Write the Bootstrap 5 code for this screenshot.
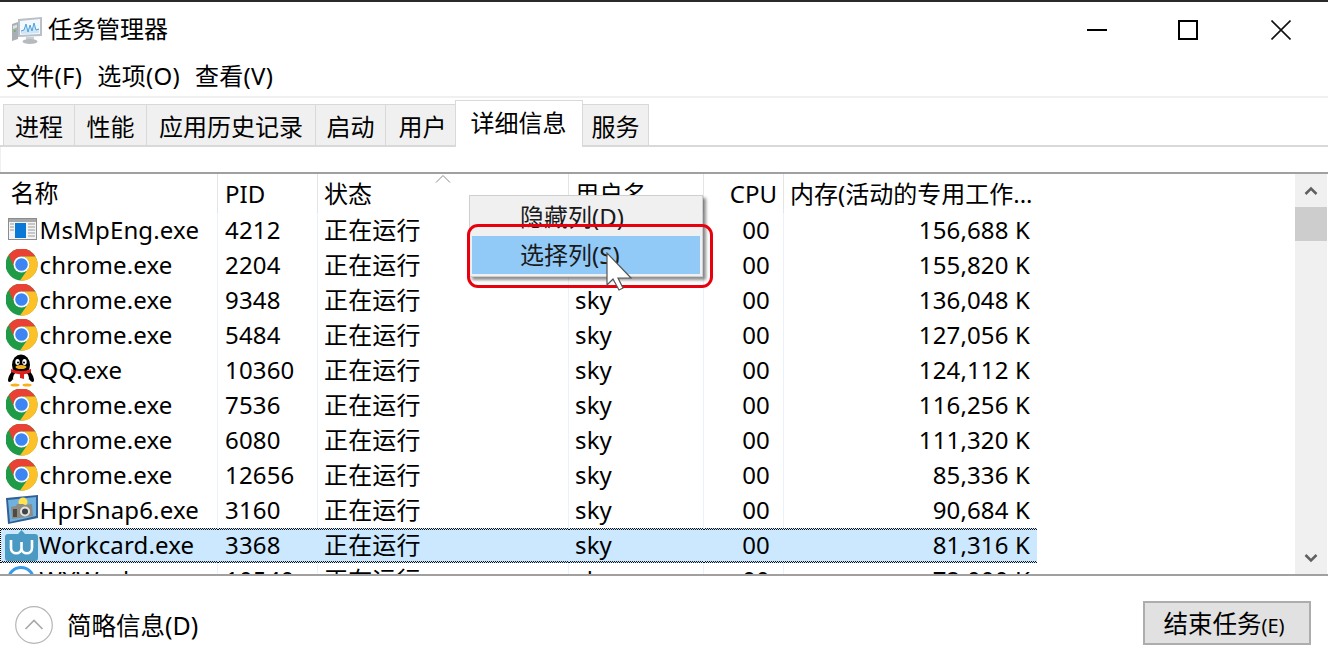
<!DOCTYPE html>
<html lang="zh-CN">
<head>
<meta charset="utf-8">
<title>任务管理器</title>
<link href="https://cdn.jsdelivr.net/npm/bootstrap@5.3.0/dist/css/bootstrap.min.css" rel="stylesheet">
<style>
html,body{margin:0;background:#fff}
body{width:1328px;height:672px;overflow:hidden;position:relative;color:#000;font-family:"Noto Sans","Noto Sans CJK SC",sans-serif;font-size:24px;line-height:1.2}
.tm-strip{height:2px;background:#2b2b2b}
.tm-title{height:54px;padding-left:12px;gap:6px;padding-top:1px}
.tm-title svg{width:30px;height:30px}
.tm-winbtns{margin-left:auto;gap:71px;padding-right:37px}
.tm-winbtns svg{width:20px;height:20px;display:block}
.tm-winbtns svg:last-child{margin-left:2px}
.tm-menu{height:40px;padding-left:6px;gap:15px;letter-spacing:.3px}
.tm-tabs{margin-top:0;border-top:2px solid #f0f0f0;height:51px;border-bottom:2px solid #d9d9d9;padding-left:3px;align-items:flex-end}
.tm-tab{height:41px;background:#f0f0f0;border:1px solid #d9d9d9;border-bottom:0;margin-right:-1px;display:flex;align-items:center;justify-content:center;padding-top:4px}
.tm-tab.tm-on{height:47px;background:#fff;margin-bottom:-2px;padding-top:0;padding-bottom:2px;position:relative}
.tm-w1{width:72px}.tm-w2{width:73px}.tm-w3{width:170px}.tm-w4{width:71px}.tm-w5{width:71px;padding-left:4px}.tm-w6{width:128px;padding-right:1px}.tm-w7{width:67px}
.tm-filter{height:25px;border-left:1px solid #f0f0f0}
.tm-wrap{height:404px;border-top:2px solid #a0a0a0;border-bottom:2px solid #a0a0a0;overflow:hidden}
.tm-scroller{width:1037px;height:400px;overflow:hidden;flex:none}
.tm-grid{width:1037px;table-layout:fixed;margin:0;--bs-table-bg:transparent;border-collapse:collapse}
.tm-grid th,.tm-grid td{padding:0 7px;height:35px;font-weight:400;white-space:nowrap;overflow:hidden;border:0;border-right:1px solid #eaf2fb;vertical-align:middle;color:#000;box-shadow:none;letter-spacing:.15px}
.tm-grid th{height:39px;border-right-color:#e5e5e5;padding-top:1px;letter-spacing:0}
.tm-grid td:first-child,.tm-grid th:first-child{padding:0 0 0 5px}
.tm-grid th:first-child{padding-left:10px}
.tm-grid th:nth-child(3),.tm-grid td:nth-child(3),.tm-grid th:nth-child(4),.tm-grid td:nth-child(4){padding-left:6px}
.tm-grid th.tm-num{padding-right:6px}
.tm-grid th:last-child{padding-left:6px;padding-right:0}
.tm-c1{width:217px}.tm-c2{width:100px}.tm-c3{width:251px}.tm-c4{width:135px}.tm-c5{width:80px}.tm-c6{width:254px}
.tm-name{display:flex;align-items:center;gap:1px}
.tm-name svg{width:33px;height:33px;flex:none}
.tm-num{text-align:right}
.tm-cpu{text-align:right;padding-right:13px!important}
.tm-grid tr.tm-sel td{background:#cce8ff;border-right-color:#cce8ff;position:relative;overflow:visible}
.tm-grid tr.tm-sel td::before,.tm-grid tr.tm-sel td::after{content:"";position:absolute;left:0;right:-1px;height:2px;background:repeating-conic-gradient(#111 0 25%,#cce8ff 0 50%) 0 0/2px 2px}
.tm-grid tr.tm-sel td:last-child::before,.tm-grid tr.tm-sel td:last-child::after{right:0}
.tm-grid tr.tm-sel td::before{top:0}
.tm-grid tr.tm-sel td::after{bottom:0}
.tm-grid tr.tm-sel td:first-child{border-left:1px dotted #000;padding-left:4px}
.tm-grid tr.tm-sel td:last-child{border-right:1px dotted #000}
.tm-sort{position:relative}
.tm-sort svg{position:absolute;left:117px;top:1px;width:16px;height:8px}
.tm-sb{width:32px;margin-left:auto;margin-right:1px;background:#f0f0f0;height:400px}
.tm-sb-up,.tm-sb-dn{height:33px;display:flex;align-items:center;justify-content:center}
.tm-sb svg{width:14px;height:10px}
.tm-thumb{height:34px;background:#cdcdcd;margin-top:0}
.tm-sb-fill{height:300px}
.tm-foot{height:96px;padding:0 17px 2px 15px}
.tm-collapse{gap:14px;margin-top:4px;font-size:24.500px}
.tm-collapse svg{width:38px;height:38px}
.tm-small{font-size:25px}
.tm-tiny{font-size:20px}
.tm-end{width:168px;height:44px;background:#e1e1e1;border:2px solid #adadad;border-radius:0;color:#000;font-size:24.500px;padding:2px 6px 0 0;line-height:1;--bs-btn-hover-bg:#e1e1e1}
.tm-menu-pop{position:absolute;left:469px;top:195px;width:234px;height:82px;background:#f0f0f0;border:1px solid #cfcfcf;box-shadow:3px 3px 3px rgba(0,0,0,.45);padding:2px}
.tm-item{height:38px;padding-left:48px;display:flex;align-items:center;color:#1a1a1a}
.tm-item.tm-hi{background:#91c9f7;padding-top:1px}
.tm-ring{position:absolute;left:467px;top:224px;width:246px;height:64px;border:3px solid #e8000d;border-radius:11px}
.tm-cursor{position:absolute;left:605px;top:252px;width:28px;height:40px}
</style>
</head>
<body>
<svg width="0" height="0" class="position-absolute">
<defs>
<symbol id="i-chrome" viewBox="0 0 33 33">
<g transform="translate(-.5 -.5)">
<circle cx="16" cy="16" r="16" fill="#1f9a46"/>
<path d="M3.200 6.400A16 16 0 0 1 29.860 8H16A8 8 0 0 0 9.100 20Z" fill="#e94235"/>
<path d="M16 8H29.860A16 16 0 0 1 14.500 32L22.900 20A8 8 0 0 0 16 8Z" fill="#fdc127"/>
<circle cx="16" cy="16" r="8" fill="#fff"/>
<circle cx="16" cy="16" r="6.300" fill="#3d85f2"/>
</g>
</symbol>
</defs>
</svg>
<div class="tm-strip"></div>
<div class="tm-title d-flex align-items-center">
<svg viewBox="0 0 30 30"><path d="M0 9l6-2v17l-6 2z" fill="#a9afb3"/><path d="M1 11l4-1.500v3L1 14z" fill="#dfe3e5"/><path d="M2 15h1.500v2H2z" fill="#68b84e"/><path d="M6 4l24-2v19L6 22z" fill="#b9c1c7"/><path d="M8 6l20-2v15L8 20z" fill="#f2f8fd"/><path d="M9 16l3-1 2-6 2 8 2-7 2 6 2-8 2 7 3-1v4l-18 1z" fill="#cfe5f5"/><path d="M9 16l3-1 2-6 2 8 2-7 2 6 2-8 2 7 3-1" fill="none" stroke="#4ea2dc" stroke-width="1"/><path d="M14 22h8v3h-8z" fill="#c9ced2"/><ellipse cx="18" cy="26.500" rx="7.500" ry="2.500" fill="#b4babe"/></svg>
<span>任务管理器</span>
<div class="tm-winbtns d-flex align-items-center">
<svg viewBox="0 0 20 20"><path d="M0 10h20" stroke="#000" stroke-width="2"/></svg>
<svg viewBox="0 0 20 20"><rect x="1" y="1" width="18" height="18" fill="none" stroke="#000" stroke-width="2"/></svg>
<svg viewBox="0 0 20 20"><path d="M.5.5l19 19M19.500.5l-19 19" stroke="#111" stroke-width="1.600"/></svg>
</div>
</div>
<div class="tm-menu d-flex align-items-center"><span>文件(F)</span><span>选项(O)</span><span>查看(V)</span></div>
<div class="tm-tabs d-flex">
<div class="tm-tab tm-w1">进程</div><div class="tm-tab tm-w2">性能</div><div class="tm-tab tm-w3">应用历史记录</div><div class="tm-tab tm-w4">启动</div><div class="tm-tab tm-w5">用户</div><div class="tm-tab tm-on tm-w6">详细信息</div><div class="tm-tab tm-w7">服务</div>
</div>
<div class="tm-filter"></div>
<div class="tm-wrap d-flex">
<div class="tm-scroller">
<table class="table tm-grid">
<colgroup><col class="tm-c1"><col class="tm-c2"><col class="tm-c3"><col class="tm-c4"><col class="tm-c5"><col class="tm-c6"></colgroup>
<thead><tr><th>名称</th><th>PID</th><th class="tm-sort">状态<svg viewBox="0 0 16 8"><path d="M1 7.500l7-7 7 7" fill="none" stroke="#8a8a8a" stroke-width="1"/></svg></th><th>用户名</th><th class="tm-num">CPU</th><th>内存(活动的专用工作...</th></tr></thead>
<tbody>
<tr><td><div class="tm-name"><svg viewBox="0 0 33 33"><rect x="2.500" y="4.500" width="28" height="21" fill="#f4f4f4" stroke="#8c8c8c"/><rect x="3" y="5" width="27" height="3" fill="#a8a8a8"/><rect x="9" y="9" width="11" height="15" fill="#0a78d7"/><path d="M4 10h4M4 13h4M4 16h4M22 10h7M22 13h7M22 16h7M22 19h7M22 22h7" stroke="#9a9a9a"/></svg>MsMpEng.exe</div></td><td>4212</td><td>正在运行</td><td></td><td class="tm-cpu">00</td><td class="tm-num">156,688 K</td></tr>
<tr><td><div class="tm-name"><svg><use href="#i-chrome"/></svg>chrome.exe</div></td><td>2204</td><td>正在运行</td><td></td><td class="tm-cpu">00</td><td class="tm-num">155,820 K</td></tr>
<tr><td><div class="tm-name"><svg><use href="#i-chrome"/></svg>chrome.exe</div></td><td>9348</td><td>正在运行</td><td>sky</td><td class="tm-cpu">00</td><td class="tm-num">136,048 K</td></tr>
<tr><td><div class="tm-name"><svg><use href="#i-chrome"/></svg>chrome.exe</div></td><td>5484</td><td>正在运行</td><td>sky</td><td class="tm-cpu">00</td><td class="tm-num">127,056 K</td></tr>
<tr><td><div class="tm-name"><svg viewBox="0 0 33 33"><g transform="translate(-2 0)"><ellipse cx="17" cy="11" rx="9" ry="10.500" fill="#000"/><path d="M8 17c-4 6-5 10-3 11 2 0 3-2 4-3 2 3 14 3 16 0 1 1 2 3 4 3 2-1 1-5-3-11z" fill="#000"/><ellipse cx="17" cy="24" rx="8" ry="7" fill="#fff"/><ellipse cx="13.500" cy="8" rx="2.200" ry="3" fill="#fff"/><ellipse cx="20.500" cy="8" rx="2.200" ry="3" fill="#fff"/><circle cx="14" cy="8.500" r="1" fill="#000"/><circle cx="20" cy="8.500" r="1" fill="#000"/><ellipse cx="17" cy="13" rx="5.500" ry="2" fill="#f7b21b"/><path d="M7 15c6 2.500 14 2.500 20 0v3c-2 1.500-5 2-7 2.300V25l-4-1v-3.700c-3-.3-6-1-9-2.300z" fill="#e01f1f"/><ellipse cx="11" cy="31" rx="4.500" ry="1.500" fill="#f7b21b"/><ellipse cx="23" cy="31" rx="4.500" ry="1.500" fill="#f7b21b"/></g></svg>QQ.exe</div></td><td>10360</td><td>正在运行</td><td>sky</td><td class="tm-cpu">00</td><td class="tm-num">124,112 K</td></tr>
<tr><td><div class="tm-name"><svg><use href="#i-chrome"/></svg>chrome.exe</div></td><td>7536</td><td>正在运行</td><td>sky</td><td class="tm-cpu">00</td><td class="tm-num">116,256 K</td></tr>
<tr><td><div class="tm-name"><svg><use href="#i-chrome"/></svg>chrome.exe</div></td><td>6080</td><td>正在运行</td><td>sky</td><td class="tm-cpu">00</td><td class="tm-num">111,320 K</td></tr>
<tr><td><div class="tm-name"><svg><use href="#i-chrome"/></svg>chrome.exe</div></td><td>12656</td><td>正在运行</td><td>sky</td><td class="tm-cpu">00</td><td class="tm-num">85,336 K</td></tr>
<tr><td><div class="tm-name"><svg viewBox="0 0 33 33"><path d="M0 4l32-3v23L2 30z" fill="#2f5f95"/><path d="M2 6l28-3v19L4 28z" fill="#6fb2e0"/><circle cx="17" cy="8" r="4.500" fill="#ffe34f"/><path d="M5 13l5-1 1-2h6l2 1 7-1 1 12-21 3z" fill="#8d8b84"/><circle cx="19" cy="17.500" r="5" fill="#e3e3de"/><circle cx="19" cy="17.500" r="3" fill="#3f444a"/><path d="M7 15h4v8H7z" fill="#4d4b46"/></svg>HprSnap6.exe</div></td><td>3160</td><td>正在运行</td><td>sky</td><td class="tm-cpu">00</td><td class="tm-num">90,684 K</td></tr>
<tr class="tm-sel"><td><div class="tm-name"><svg viewBox="0 0 33 33"><path d="M3 5h10l3.500-4 3.500 4h10a3 3 0 0 1 3 3v21a3 3 0 0 1-3 3H3a3 3 0 0 1-3-3V8a3 3 0 0 1 3-3z" fill="#4a9ac4"/><path d="M6 11v8a5 5 0 0 0 10.500 0v-6 6a5 5 0 0 0 10.500 0v-8" fill="none" stroke="#fff" stroke-width="2.600"/></svg>Workcard.exe</div></td><td>3368</td><td>正在运行</td><td>sky</td><td class="tm-cpu">00</td><td class="tm-num">81,316 K</td></tr>
<tr><td><div class="tm-name"><svg viewBox="0 0 33 33"><circle cx="15" cy="16" r="12.500" fill="none" stroke="#3a9be8" stroke-width="3"/></svg>WXWork.exe</div></td><td>10540</td><td>正在运行</td><td>sky</td><td class="tm-cpu">00</td><td class="tm-num">72,000 K</td></tr>
</tbody>
</table>
</div>
<div class="tm-sb">
<div class="tm-sb-up"><svg viewBox="0 0 14 10"><path d="M1.500 8L7 2.500 12.500 8" fill="none" stroke="#606060" stroke-width="2.500"/></svg></div>
<div class="tm-thumb"></div>
<div class="tm-sb-fill"></div>
<div class="tm-sb-dn"><svg viewBox="0 0 14 10"><path d="M1.500 2L7 7.500 12.500 2" fill="none" stroke="#606060" stroke-width="2.500"/></svg></div>
</div>
</div>
<div class="tm-foot d-flex align-items-center justify-content-between">
<div class="tm-collapse d-flex align-items-center">
<svg viewBox="0 0 38 38"><circle cx="19" cy="19" r="18.300" fill="none" stroke="#b5b5b5" stroke-width="1.200"/><path d="M10.500 23L19 14.500 27.500 23" fill="none" stroke="#a8a8a8" stroke-width="1.600"/></svg>
<span>简略信息<span class="tm-small">(D)</span></span>
</div>
<button type="button" class="btn tm-end">结束任务<span class="tm-tiny">(E)</span></button>
</div>
<div class="tm-menu-pop">
<div class="tm-item">隐藏列(D)</div>
<div class="tm-item tm-hi">选择列(S)</div>
</div>
<div class="tm-ring"></div>
<svg class="tm-cursor" viewBox="0 0 28 40"><path d="M2 1v32l6-6 6 11 4-2-5-10h13z" fill="#fff" stroke="#555" stroke-width="1.200"/></svg>
</body>
</html>
